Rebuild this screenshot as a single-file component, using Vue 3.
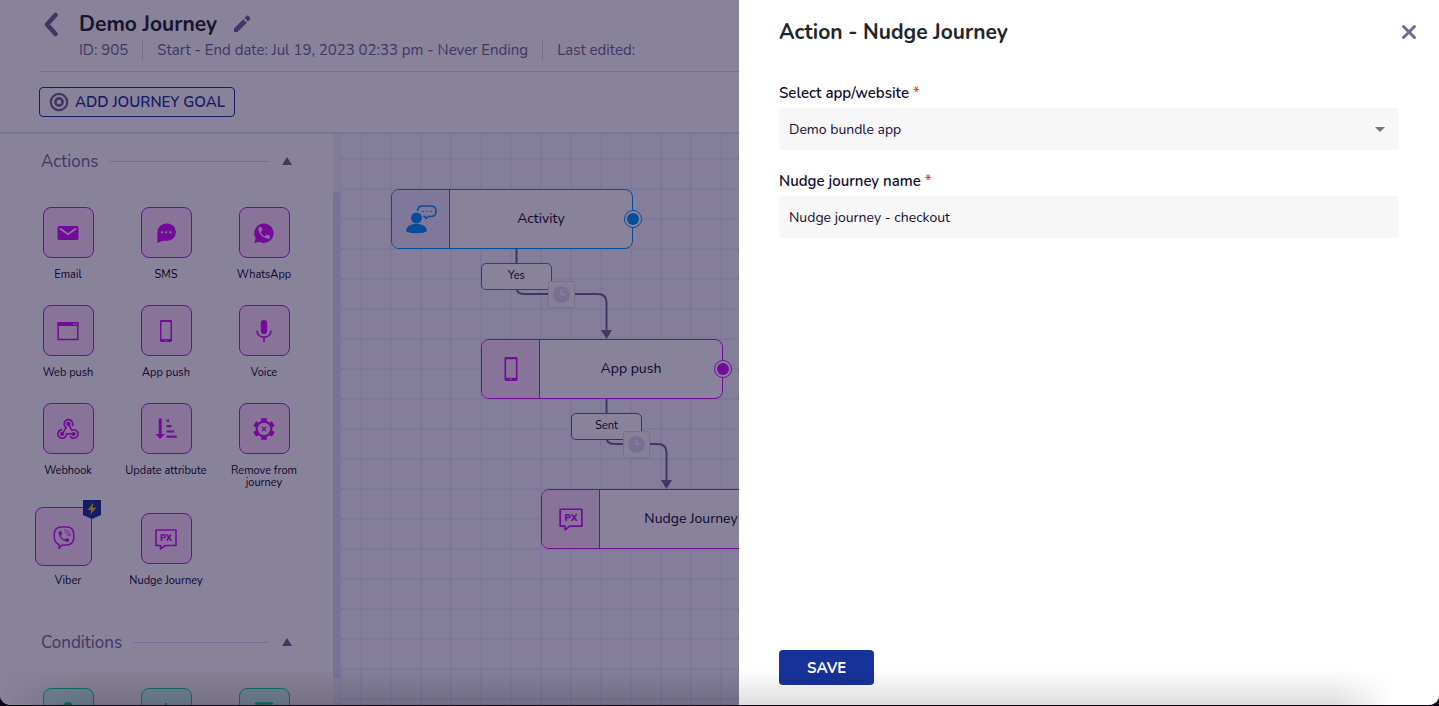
<script setup>
import { ref } from 'vue';

const PHONE = 'M6.62 10.79c1.44 2.83 3.76 5.14 6.59 6.59l2.2-2.2c.27-.27.67-.36 1.02-.24 1.12.37 2.33.57 3.57.57.55 0 1 .45 1 1V20c0 .55-.45 1-1 1-9.39 0-17-7.61-17-17 0-.55.45-1 1-1h3.5c.55 0 1 .45 1 1 0 1.25.2 2.45.57 3.57.11.35.03.74-.25 1.02l-2.2 2.2z';

// Inner markup of the 24x24 icons, coloured by the parent's text colour
const icons = {
  email: '<rect x="1.5" y="5" width="21" height="14" rx="1.5" fill="currentColor"/><path d="M4.5 8l7.5 5.2L19.5 8" fill="none" stroke="#ffe3fd" stroke-width="1.8" stroke-linecap="round"/>',
  sms: '<path d="M12 2.5a8.7 8.7 0 1 1 0 17.2c-3 0-5.5.2-8.6 2.5V11.2A8.7 8.7 0 0 1 12 2.5z" fill="currentColor"/><circle cx="8" cy="11.3" r="1.1" fill="#ffe3fd"/><circle cx="12.2" cy="11.3" r="1.1" fill="#ffe3fd"/><circle cx="16.4" cy="11.3" r="1.1" fill="#ffe3fd"/>',
  whatsapp: `<path d="M12 2.5a9.7 9.7 0 1 1-4.8 18.2L2.4 22l1.3-4.7A9.7 9.7 0 0 1 12 2.5z" fill="currentColor"/><path d="${PHONE}" fill="#ffe3fd" transform="translate(4.4 4.3) scale(.64)"/>`,
  web: '<path d="M2.2 3.7h19.6v16.8H2.2z" fill="none" stroke="currentColor" stroke-width="1.5"/><path d="M1.5 3h21v4h-21z" fill="currentColor"/><path d="M17.3 4.4h1.3v1.3h-1.3zM19.7 4.4h1.3v1.3h-1.3z" fill="#ffe3fd"/>',
  phone: '<path d="M7 1h10a1 1 0 0 1 1 1v20a1 1 0 0 1-1 1H7a1 1 0 0 1-1-1V2a1 1 0 0 1 1-1zm.5 2v17h9V3z" fill="currentColor"/><circle cx="12" cy="21.5" r=".7" fill="#ffe3fd"/>',
  voice: '<rect x="8.8" y="1" width="6.4" height="14" rx="3.2" fill="currentColor"/><path d="M5 11.5c0 4 3 6.6 7 6.6s7-2.6 7-6.6M12 18v5" fill="none" stroke="currentColor" stroke-width="1.6"/>',
  webhook: '<path fill="currentColor" transform="translate(-1.3 -1.2) scale(1.11)" d="M10.46,19C9,21.07 6.15,21.59 4.09,20.15C2.04,18.71 1.56,15.84 3,13.75C3.87,12.5 5.21,11.83 6.58,11.77L6.63,13.2C5.72,13.27 4.84,13.74 4.27,14.56C3.27,16 3.58,17.94 4.95,18.91C6.33,19.87 8.26,19.5 9.26,18.07C9.57,17.62 9.75,17.13 9.82,16.63V15.62L15.4,15.58L15.47,15.47C16,14.55 17.15,14.23 18.05,14.75C18.95,15.27 19.26,16.43 18.73,17.35C18.2,18.26 17.04,18.58 16.14,18.06C15.73,17.83 15.44,17.46 15.31,17.04L11.24,17.06C11.13,17.73 10.87,18.38 10.46,19M17.74,11.86C20.27,12.17 22.07,14.44 21.76,16.93C21.45,19.43 19.15,21.2 16.62,20.89C15.13,20.71 13.9,19.86 13.19,18.68L14.43,17.96C14.92,18.73 15.75,19.28 16.75,19.41C18.5,19.62 20.05,18.43 20.26,16.76C20.47,15.09 19.23,13.56 17.5,13.35C16.96,13.29 16.44,13.36 15.97,13.53L15.12,13.97L12.54,9.2H12.32C11.26,9.16 10.41,8.29 10.44,7.25C10.47,6.21 11.4,5.4 12.45,5.44C13.5,5.5 14.33,6.35 14.3,7.39C14.28,7.83 14.11,8.23 13.84,8.54L15.74,12.05C16.36,11.85 17.04,11.78 17.74,11.86M8.25,9.14C7.25,6.79 8.31,4.1 10.62,3.12C12.94,2.14 15.62,3.25 16.62,5.6C17.21,6.97 17.09,8.47 16.42,9.67L15.18,8.95C15.6,8.14 15.67,7.15 15.27,6.22C14.59,4.62 12.78,3.85 11.23,4.5C9.67,5.16 8.97,7 9.65,8.6C9.93,9.26 10.4,9.77 10.97,10.11L11.36,10.32L8.29,15.31C8.32,15.36 8.36,15.42 8.39,15.5C8.88,16.41 8.54,17.56 7.62,18.05C6.71,18.54 5.56,18.18 5.06,17.24C4.57,16.31 4.91,15.16 5.83,14.67C6.22,14.46 6.65,14.41 7.06,14.5L9.37,10.73C8.9,10.3 8.5,9.76 8.25,9.14Z"/>',
  attribute: '<path d="M4.7 1.5h3V17h3.1l-4.6 5-4.7-5h3.2zM12.5 2.5H15v2.3h-2.5zM12.5 8h5v2.2h-5zM12.5 13.4h7.8v2.2h-7.8zM12.5 18.5h10.3v2.2H12.5z" fill="currentColor"/>',
  remove: '<g fill="currentColor"><path d="M9.2 1.2h5.6v4H9.2zM9.2 18.8h5.6v4H9.2z"/><path d="M9.2 1.2h5.6v4H9.2zM9.2 18.8h5.6v4H9.2z" transform="rotate(60 12 12)"/><path d="M9.2 1.2h5.6v4H9.2zM9.2 18.8h5.6v4H9.2z" transform="rotate(120 12 12)"/></g><circle cx="12" cy="12" r="7.3" fill="none" stroke="currentColor" stroke-width="2.2"/><path d="M9.7 9.7l4.6 4.6M14.3 9.7l-4.6 4.6" stroke="currentColor" stroke-width="1.2"/>',
  viber: `<path d="M12 1.8c7.5 0 9.8 2.4 9.8 9.2s-2.5 9.2-9.8 9.2c-.8 0-1.4 0-2-.1L7 23.500v-4c-3.700-1-4.800-3.600-4.800-8.500 0-6.800 2.400-9.200 9.800-9.200z" fill="none" stroke="currentColor" stroke-width="1.5"/><path d="${PHONE}" fill="currentColor" transform="translate(4.8 4.6) scale(.58)"/><path d="M12.6 5c3.6.2 5.6 2.4 5.7 6M12.9 7.2c2.2.2 3.3 1.5 3.4 3.6" fill="none" stroke="currentColor" stroke-width=".9" stroke-linecap="round"/>`,
  px: '<path d="M2 3h20v15.500H11L6.500 22v-3.500H2z" fill="none" stroke="currentColor" stroke-width="1.6" stroke-linejoin="round"/><text x="12" y="14" text-anchor="middle" font-size="9" font-weight="900" fill="currentColor">PX</text>',
  user: '<circle cx="12" cy="4" r="4.5" fill="currentColor"/>',
  plus: '<path d="M12 1v22M1 12h22" stroke="currentColor" stroke-width="2"/>',
  list: '<path d="M4 1.500h16M4 8h16M4 14.500h16" stroke="currentColor" stroke-width="2.5" stroke-linecap="round"/>',
};

const sections = ref([
  {
    title: 'Actions',
    kind: 'action',
    items: [
      { label: 'Email', icon: 'email' },
      { label: 'SMS', icon: 'sms' },
      { label: 'WhatsApp', icon: 'whatsapp' },
      { label: 'Web push', icon: 'web' },
      { label: 'App push', icon: 'phone' },
      { label: 'Voice', icon: 'voice' },
      { label: 'Webhook', icon: 'webhook' },
      { label: 'Update attribute', icon: 'attribute' },
      { label: 'Remove from journey', icon: 'remove' },
      { label: 'Viber', icon: 'viber', premium: true },
      { label: 'Nudge Journey', icon: 'px' },
    ],
  },
  {
    title: 'Conditions',
    kind: 'condition',
    items: [
      { label: '', icon: 'user' },
      { label: '', icon: 'plus' },
      { label: '', icon: 'list' },
    ],
  },
]);

const app = ref('Demo bundle app');
const journeyName = ref('Nudge journey - checkout');
const showDrawer = ref(true);

function closeDrawer() {
  showDrawer.value = false;
}
</script>

<template>
  <div class="window">
    <div class="page">
      <header class="header">
        <div class="titleBlock">
          <button class="iconButton back" aria-label="Back">
            <svg width="16" height="26" viewBox="0 0 16 26"><path d="M12.500 3L4 12.500l8.500 9.500" fill="none" stroke="currentColor" stroke-width="4.500" stroke-linecap="round" stroke-linejoin="round"/></svg>
          </button>
          <div>
            <div class="titleRow">
              <h1>Demo Journey</h1>
              <button class="iconButton" aria-label="Edit name">
                <svg width="18" height="18" viewBox="0 0 18 18"><path d="M1 13.500L10.300 4.200l3.500 3.500L4.500 17H1zM11.500 3L13.800.8q.7-.6 1.400 0l2 2q.6.7 0 1.400L15 6.500z" fill="currentColor"/></svg>
              </button>
            </div>
            <div class="meta">
              <span>ID: 905</span>
              <span>Start - End date: Jul 19, 2023 02:33 pm - Never Ending</span>
              <span>Last edited:</span>
            </div>
          </div>
        </div>
        <div class="goalRow">
          <button class="goalButton">
            <svg width="20" height="20" viewBox="0 0 20 20"><g fill="none" stroke="currentColor"><circle cx="10" cy="10" r="8.200" stroke-width="2.200"/><circle cx="10" cy="10" r="3.600" stroke-width="2.600"/></g></svg>
            ADD JOURNEY GOAL
          </button>
        </div>
      </header>

      <main class="workspace">
        <nav class="sidebar">
          <div class="palette">
            <section v-for="section in sections" :key="section.title" :class="['section', section.kind]">
              <div class="sectionHeader">
                <h2>{{ section.title }}</h2>
                <hr>
                <button class="iconButton" aria-label="Collapse">
                  <svg width="12" height="10" viewBox="0 0 12 10"><path d="M6 1l5 8H1z" fill="currentColor"/></svg>
                </button>
              </div>
              <div class="tiles">
                <div v-for="item in section.items" :key="item.icon" class="tile">
                  <div :class="['tileBox', { premium: item.premium }]">
                    <svg width="24" height="24" viewBox="0 0 24 24" v-html="icons[item.icon]"></svg>
                    <svg v-if="item.premium" class="badge" width="18" height="19" viewBox="0 0 18 19"><path d="M0 0h18v15l-9 4-9-4z" fill="#17329a"/><path d="M10.500 2.500L4.500 10h3.800L7 15l6.500-7.500H9.700z" fill="#ffb800"/></svg>
                  </div>
                  <span class="tileLabel">{{ item.label }}</span>
                </div>
              </div>
            </section>
          </div>
          <div class="scrollTrack"><div class="scrollThumb"></div></div>
        </nav>

        <div class="canvas">
          <svg class="edges" width="460" height="420" viewBox="0 0 460 420">
            <g fill="none" stroke="currentColor" stroke-width="2">
              <path d="M175.500 114v16M176 155q0 5 8 5h73q8.500 0 8.500 8.500v30"/>
              <path d="M265.500 264v16M266 305q0 5 8 5h43q8.500 0 8.500 8.500v30"/>
            </g>
            <path d="M260 196h11l-5.500 9zM320 346h11l-5.500 9z" fill="currentColor"/>
          </svg>

          <div class="node activity">
            <div class="nodeIcon">
              <svg width="32" height="30" viewBox="0 0 32 30">
                <g fill="currentColor"><circle cx="11.500" cy="14" r="5.500"/><path d="M1 27c.5-4.500 4-7 10.500-7S21.500 22.500 22 27c-2 3-19 3-21 0z"/></g>
                <path d="M12.500 7c0-3 2-5 5-5h8c3.500 0 5.500 2.200 5.500 5.200s-2 5.300-5.500 5.300h-2l-2.500 2-.8-2h-2" fill="none" stroke="currentColor" stroke-width="1.500"/>
                <g fill="currentColor"><circle cx="18" cy="7.500" r=".8"/><circle cx="22" cy="7.500" r=".8"/><circle cx="26" cy="7.500" r=".8"/></g>
              </svg>
            </div>
            <div class="nodeName">Activity</div>
            <span class="port"></span>
          </div>
          <div class="branch activityBranch"><span>Yes</span></div>
          <div class="delay delayOne">
            <svg width="17" height="17" viewBox="0 0 17 17"><circle cx="8.500" cy="8.500" r="8.500" fill="#dedbf0"/><path d="M8.500 3.500V8.500h4" fill="none" stroke="#fff" stroke-width="1.500"/></svg>
          </div>

          <div class="node push">
            <div class="nodeIcon">
              <svg width="26" height="26" viewBox="0 0 24 24" v-html="icons.phone"></svg>
            </div>
            <div class="nodeName">App push</div>
            <span class="port"></span>
          </div>
          <div class="branch pushBranch"><span>Sent</span></div>
          <div class="delay delayTwo">
            <svg width="17" height="17" viewBox="0 0 17 17"><circle cx="8.500" cy="8.500" r="8.500" fill="#dedbf0"/><path d="M8.500 3.500V8.500h4" fill="none" stroke="#fff" stroke-width="1.500"/></svg>
          </div>

          <div class="node nudge">
            <div class="nodeIcon">
              <svg width="26" height="26" viewBox="0 0 24 24" v-html="icons.px"></svg>
            </div>
            <div class="nodeName">Nudge Journey</div>
            <span class="port"></span>
          </div>
        </div>
      </main>

      <div v-if="showDrawer" class="backdrop" @click="closeDrawer"></div>

      <aside v-if="showDrawer" class="drawer">
        <div class="drawerHeader">
          <h2>Action - Nudge Journey</h2>
          <button class="iconButton" aria-label="Close" @click="closeDrawer">
            <svg width="16" height="16" viewBox="0 0 16 16"><path d="M2.500 2.500l11 11M13.500 2.500l-11 11" stroke="currentColor" stroke-width="3" stroke-linecap="round"/></svg>
          </button>
        </div>
        <form class="form" @submit.prevent="closeDrawer">
          <div class="field">
            <label for="app">Select app/website <span class="required">*</span></label>
            <div class="selectBox">
              <select id="app" v-model="app">
                <option>Demo bundle app</option>
              </select>
              <svg class="arrow" width="10" height="5" viewBox="0 0 10 5"><path d="M0 0h10L5 5z" fill="#757575"/></svg>
            </div>
          </div>
          <div class="field">
            <label for="journey-name">Nudge journey name <span class="required">*</span></label>
            <input id="journey-name" type="text" v-model="journeyName">
          </div>
          <button class="save" type="submit">SAVE</button>
        </form>
      </aside>

      <div class="bottomShade"></div>
    </div>
  </div>
</template>

<style>
body {
  background: #0b0418;
  overflow: hidden;
}
</style>

<style scoped>
.window {
  box-sizing: border-box;
  height: 100vh;
  padding-bottom: 1px;
  background: #0b0418;
  font-family: Nunito, "Noto Sans", sans-serif;
  font-size: 14px;
  color: #120b33;
}

.window * {
  box-sizing: border-box;
}

.page {
  position: relative;
  display: flex;
  flex-direction: column;
  height: 100%;
  overflow: hidden;
  background: #fff;
  border-radius: 0 0 10px 10px;
}

h1,
h2 {
  margin: 0;
}

button,
input,
select {
  font-family: inherit;
}

svg {
  display: block;
  flex: none;
}

.iconButton {
  padding: 0;
  border: 0;
  background: none;
  color: #6f6994;
  cursor: pointer;
}

.header {
  flex: none;
  border-bottom: 2px solid #e4e2ff;
}

.titleBlock {
  display: flex;
  align-items: flex-start;
  gap: 20px;
  height: 72px;
  margin-left: 39px;
  padding: 12px 0 0 4px;
  border-bottom: 1px solid #dcd9e4;
}

.titleRow {
  display: flex;
  align-items: center;
  gap: 16px;
  height: 24px;
}

.titleRow h1 {
  color: #212529;
  font-size: 21px;
  line-height: 24px;
}

.meta {
  display: flex;
  margin-top: 4px;
  color: #6f6994;
  font-size: 15px;
  line-height: 21px;
  white-space: nowrap;
}

.meta span + span {
  margin-left: 14px;
  padding-left: 14px;
  border-left: 1px solid #dcd9e4;
}

.goalRow {
  padding: 15px 39px;
}

.goalButton {
  display: flex;
  align-items: center;
  gap: 6px;
  height: 30px;
  padding: 0 9px;
  border: 1px solid #17329a;
  border-radius: 4px;
  background: none;
  color: #17329a;
  font-size: 15px;
  font-weight: 600;
  cursor: pointer;
}

.goalButton svg {
  color: #6f6994;
}

.workspace {
  display: flex;
  flex: 1;
  min-height: 0;
}

.sidebar {
  display: flex;
  flex: none;
  justify-content: space-between;
  width: 341px;
  border-right: 1px solid #e4e2ff;
}

.palette {
  width: 313px;
  padding: 15px 0 0 19px;
  overflow: hidden;
}

.section {
  margin-bottom: 43px;
}

.sectionHeader {
  display: flex;
  align-items: center;
  gap: 12px;
  height: 24px;
  margin-bottom: 34px;
  padding: 0 20px 0 22px;
}

.sectionHeader h2 {
  color: #6f6994;
  font-size: 17px;
  font-weight: 400;
}

.sectionHeader hr {
  flex: 1;
  margin: 0;
  border: 0;
  border-top: 1px solid #d9d7f5;
}

.tiles {
  display: grid;
  grid-template-columns: repeat(3, 98px);
  row-gap: 24px;
}

.tile {
  display: flex;
  flex-direction: column;
  align-items: center;
}

.tileBox {
  position: relative;
  display: flex;
  align-items: center;
  justify-content: center;
  width: 51px;
  height: 51px;
  margin-bottom: 11px;
  border: 1px solid currentColor;
  border-radius: 8px;
}

.action .tileBox {
  background: #ffe3fd;
  color: #d510ff;
}

.condition .tileBox {
  background: #d2fff0;
  color: #10d8a8;
}

.tileBox.premium {
  width: 57px;
  height: 59px;
  margin: -6px 9px 9px 0;
}

.badge {
  position: absolute;
  top: -8px;
  right: -10px;
}

.tileLabel {
  max-width: 90px;
  color: #0c0226;
  font-size: 11px;
  line-height: 12px;
  text-align: center;
}

.scrollTrack {
  width: 7px;
  padding-top: 58px;
  padding-bottom: 26px;
  background: #f5f3f8;
}

.scrollThumb {
  height: 100%;
  border-radius: 4px;
  background: #dfdcfb;
}

.canvas {
  position: relative;
  flex: 1;
  overflow: hidden;
  background-color: #f6f6ff;
  background-image:
    linear-gradient(90deg, #e9e9ff 2px, transparent 2px),
    linear-gradient(#e9e9ff 2px, transparent 2px);
  background-position: 19px 24px;
  background-size: 30px 30px;
}

.edges {
  position: absolute;
  top: 0;
  left: 0;
  color: #6f6994;
}

.node {
  position: absolute;
  display: flex;
  width: 242px;
  height: 60px;
  border: 1px solid currentColor;
  border-radius: 8px;
  background: #fff;
}

.activity,
.activityBranch {
  color: #0092ff;
}

.push,
.pushBranch,
.nudge {
  color: #d510ff;
}

.activity {
  top: 55px;
  left: 50px;
}

.push {
  top: 205px;
  left: 140px;
}

.nudge {
  top: 355px;
  left: 200px;
}

.nodeIcon {
  display: flex;
  align-items: center;
  justify-content: center;
  width: 58px;
  border-right: 1px solid currentColor;
  border-radius: 7px 0 0 7px;
  background: #ffe3fd;
}

.activity .nodeIcon {
  background: #eceaff;
}

.nodeName {
  flex: 1;
  color: #0c0226;
  font-size: 14px;
  line-height: 58px;
  text-align: center;
}

.port {
  position: absolute;
  top: 20px;
  right: -10px;
  width: 18px;
  height: 18px;
  padding: 2px;
  border: 1px solid currentColor;
  border-radius: 50%;
  background: linear-gradient(currentColor, currentColor) content-box, #fff;
}

.branch {
  position: absolute;
  width: 71px;
  height: 27px;
  border: 1px solid currentColor;
  border-radius: 5px;
  background: #fff;
  font-size: 11px;
  line-height: 24px;
  text-align: center;
}

.branch span {
  color: #0c0226;
}

.activityBranch {
  top: 129px;
  left: 140px;
}

.pushBranch {
  top: 279px;
  left: 230px;
}

.delay {
  position: absolute;
  display: flex;
  align-items: center;
  justify-content: center;
  width: 27px;
  height: 27px;
  border: 1px solid #e0dde9;
  border-radius: 2px;
  background: #fbfafd;
}

.delayOne {
  top: 147px;
  left: 207px;
}

.delayTwo {
  top: 297px;
  left: 282px;
}

.backdrop {
  position: absolute;
  inset: 0;
  background: rgba(17, 5, 53, 0.5);
}

.drawer {
  position: absolute;
  top: 0;
  right: 0;
  bottom: 0;
  display: flex;
  flex-direction: column;
  width: 700px;
  max-width: 100%;
  background: #fff;
}

.drawerHeader {
  display: flex;
  align-items: center;
  justify-content: space-between;
  height: 64px;
  padding: 0 22px 0 40px;
}

.drawerHeader h2 {
  color: #212529;
  font-size: 21px;
  line-height: 24px;
}

.form {
  display: flex;
  flex: 1;
  flex-direction: column;
  padding: 19px 40px 20px;
}

.field {
  margin-bottom: 21px;
}

.field label {
  display: block;
  margin-bottom: 5px;
  font-size: 15px;
  font-weight: 600;
  line-height: 20px;
}

.required {
  color: #ff3b3b;
}

.selectBox {
  position: relative;
}

.field select,
.field input {
  display: block;
  width: 100%;
  height: 42px;
  padding: 0 10px;
  border: 0;
  border-radius: 4px;
  outline: 0;
  background: #f7f7f7;
  color: #120b33;
  font-size: 14px;
  appearance: none;
}

.arrow {
  position: absolute;
  top: 19px;
  right: 14px;
  pointer-events: none;
}

.save {
  align-self: flex-start;
  height: 35px;
  margin-top: auto;
  padding: 0 28px;
  border: 0;
  border-radius: 4px;
  background: #17329a;
  color: #fff;
  font-size: 15px;
  font-weight: 700;
  cursor: pointer;
}

/* Soft shade along the lower edge of the window */
.bottomShade {
  position: absolute;
  right: 44px;
  bottom: 0;
  left: 0;
  height: 36px;
  background: linear-gradient(transparent, rgba(0, 0, 0, 0.13));
  mask-image: linear-gradient(90deg, transparent, #000 80px, #000 calc(100% - 60px), transparent);
  pointer-events: none;
}
</style>
